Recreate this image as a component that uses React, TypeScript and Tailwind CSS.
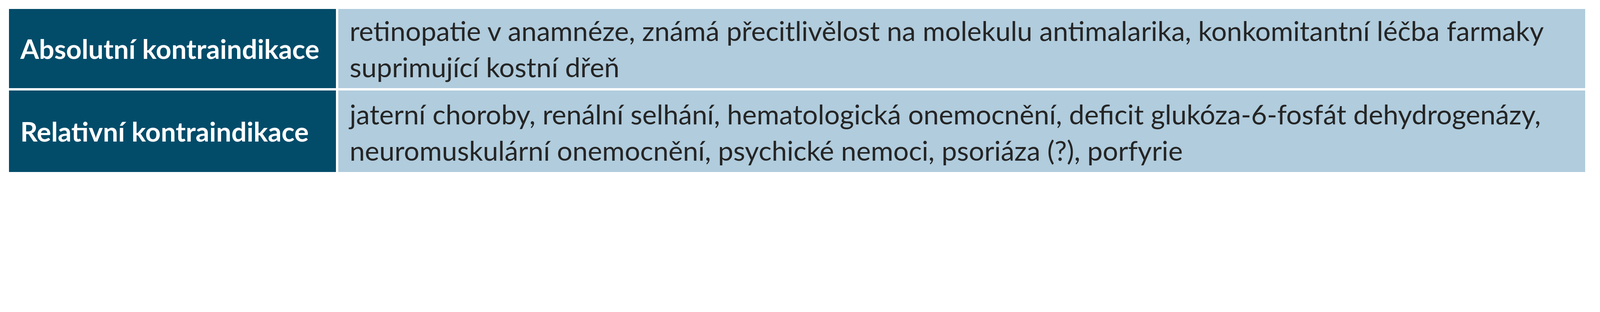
import * as React from "react";

interface ContraRow {
    label: string;
    lines: string[];
    rowClass: string;
    textClass: string;
}

const rows: ContraRow[] = [
    {
        label: "Absolutní kontraindikace",
        lines: [
            "retinopatie v anamnéze, známá přecitlivělost na molekulu antimalarika, konkomitantní léčba farmaky",
            "suprimující kostní dřeň",
        ],
        rowClass: "h-[203px]",
        textClass: "pt-0",
    },
    {
        label: "Relativní kontraindikace",
        lines: [
            "jaterní choroby, renální selhání, hematologická onemocnění, deficit glukóza-6-fosfát dehydrogenázy,",
            "neuromuskulární onemocnění, psychické nemoci, psoriáza (?), porfyrie",
        ],
        rowClass: "h-[209px]",
        textClass: "pt-[5px]",
    },
];

export default function App() {
    return (
        <div className="w-full h-[500px] bg-white p-[23px] font-['Lato',sans-serif]">
            <div className="flex flex-col gap-[6px] w-[4035px]">
                {rows.map((row) => (
                    <div key={row.label} className={`flex gap-[6px] ${row.rowClass}`}>
                        <div className="w-[837px] shrink-0 bg-[#024c6a] flex items-center pl-[29px]">
                            <span className="text-white font-bold text-[69px] leading-[93px] whitespace-nowrap">
                                {row.label}
                            </span>
                        </div>
                        <div className={`flex-1 min-w-0 bg-[#b0ccdd] flex items-center pl-[29px] ${row.textClass}`}>
                            <p className="text-[#252525] text-[70px] leading-[93px] whitespace-nowrap">
                                {row.lines.map((line, i) => (
                                    <React.Fragment key={i}>
                                        {line}
                                        {i < row.lines.length - 1 && <br />}
                                    </React.Fragment>
                                ))}
                            </p>
                        </div>
                    </div>
                ))}
            </div>
        </div>
    );
}
